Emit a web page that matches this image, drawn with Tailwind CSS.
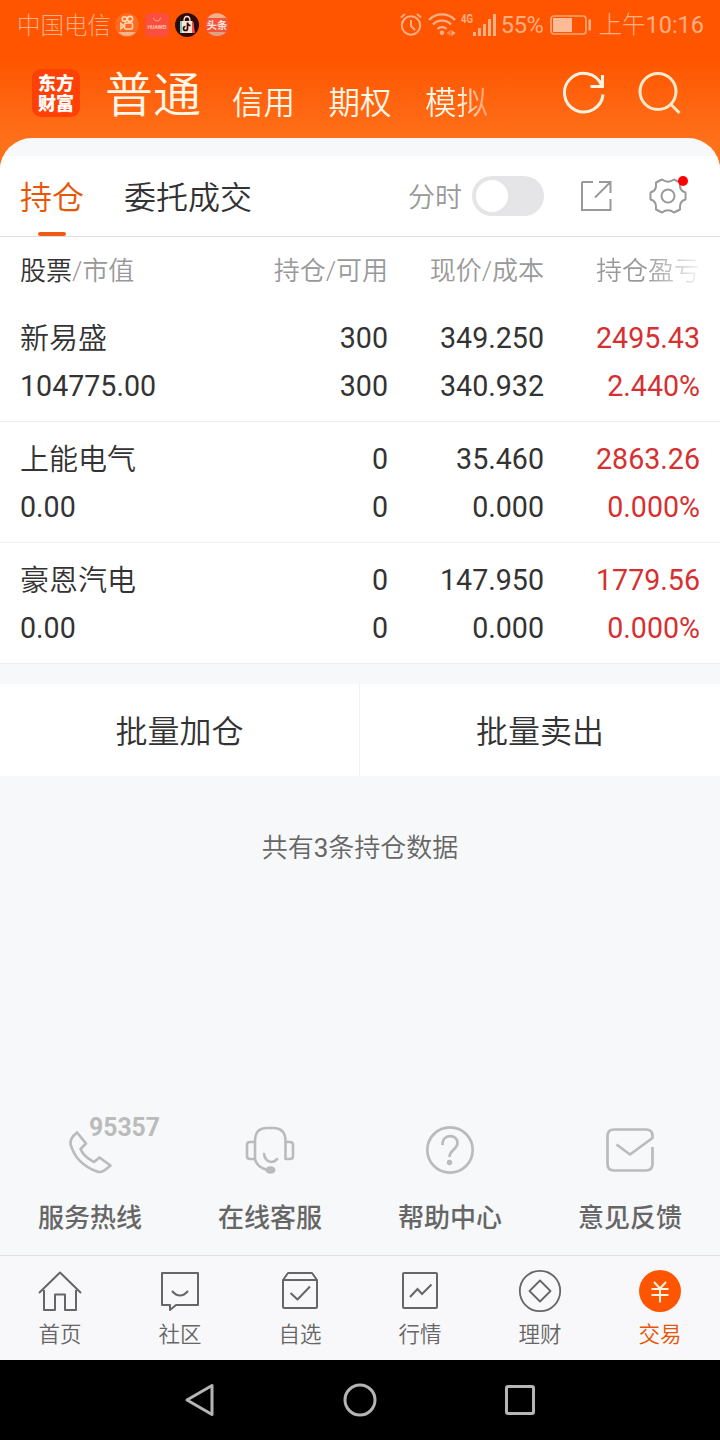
<!DOCTYPE html>
<html lang="zh-CN">
  <head>
    <meta charset="utf-8" />
    <meta name="viewport" content="width=device-width, initial-scale=1" />
    <title>持仓</title>
    <script src="https://cdn.jsdelivr.net/npm/@tailwindcss/browser@4"></script>
  </head>
  <body class="w-[720px] h-[1440px] overflow-hidden bg-[#f7f8fa] font-['Roboto','Noto_Sans_CJK_SC',sans-serif] font-[350] text-[#333]">
    <div class="w-full h-full flex flex-col">
      <header class="h-[200px] -mb-[62px] shrink-0 bg-linear-to-b from-[#ff5500] from-30% to-[#ff7019] to-70%">
        <!-- status bar -->
        <div class="h-12 pt-px pl-[17px] pr-4 flex items-center text-[#ffb084] text-[23.5px] leading-12">
          <span class="pt-0.5 font-light">中国电信</span>
          <div class="ml-1 flex items-center gap-[6px]">
            <svg class="size-6" viewBox="0 0 24 24">
              <circle cx="12" cy="12" r="12" fill="#ff6a20" />
              <g fill="none" stroke="#ffd9b8" stroke-width="1.6">
                <circle cx="9.500" cy="6" r="2.300" /><circle cx="15" cy="6" r="2.600" />
                <rect x="9.500" y="10" width="8" height="6" rx="1.500" /><path d="M6 10.500l3 2.500-3 2.500z" />
              </g>
              <path d="M3 19h18a12 12 0 0 1-18 0z" fill="#f6b48d" />
            </svg>
            <svg class="size-6" viewBox="0 0 24 24">
              <rect width="24" height="24" rx="5" fill="#fb4e3d" />
              <path d="M8.500 4.500a3.500 3.500 0 0 0 7 0" fill="none" stroke="#ffa58e" />
              <text x="12" y="15.500" text-anchor="middle" font-size="5" font-weight="700" fill="#ffc3b5" textLength="19" lengthAdjust="spacingAndGlyphs">HUAWEI</text>
            </svg>
            <svg class="size-6" viewBox="0 0 24 24">
              <circle cx="12" cy="12" r="12" fill="#2d0d0a" />
              <path d="M5 8h13l1 12H5z" fill="#ffe3d2" /><path d="M5 8h2v12H5z" fill="#7ccbc0" /><path d="M17 8h1l2 12h-3z" fill="#fb4c53" />
              <path d="M9 8c0-6 6-6 6 0" fill="none" stroke="#ffe3d2" stroke-width="1.300" />
              <path d="M12.500 9.500v6a2 2 0 1 1-2-2M12.500 10c.5 2 1.500 2.500 3 2.500" fill="none" stroke="#2d0d0a" stroke-width="1.700" />
            </svg>
            <svg class="size-6" viewBox="0 0 24 24">
              <circle cx="12" cy="12" r="12" fill="#f5533a" />
              <path d="M2.500 5a12 12 0 0 1 19 0z" fill="#f4b08a" /><path d="M3 19h18a12 12 0 0 1-18 0z" fill="#e0a183" />
              <text x="12" y="16" text-anchor="middle" font-size="10.500" font-weight="700" fill="#ffe6da">头条</text>
            </svg>
          </div>
          <svg class="ml-auto w-[22px] h-6" viewBox="0 0 22 24" fill="none" stroke="#ffb084" stroke-width="2">
            <circle cx="11" cy="12.500" r="9.200" /><path d="M11 7v6l4 4M1 4.500l4-3.500M21 4.500l-4-3.500" />
          </svg>
          <svg class="ml-[6px] w-7 h-6" viewBox="0 0 28 24" fill="none" stroke="#ffb084" stroke-width="2.300">
            <path d="M1 7a18 18 0 0 1 26 0M5 11.500a12.500 12.500 0 0 1 18 0M9.500 16a6.500 6.500 0 0 1 9 0" /><circle cx="14" cy="19.800" r="2.300" fill="#ffb084" stroke="none" />
            <path d="M18.500 20l4-3v6z" fill="#ff8a4a" stroke="none" /><path d="M27.500 20l-4-3v6z" fill="#ffb084" stroke="none" />
          </svg>
          <svg class="ml-[5px] w-9 h-6 overflow-visible" viewBox="0 0 36 24" fill="#ffb084">
            <text x="0" y="10" font-size="12.500" font-weight="700" textLength="12" lengthAdjust="spacingAndGlyphs">4G</text>
            <path d="M12 19h3v4h-3zM17 15h3v8h-3zM22 11h3v12h-3zM27 6h3v17h-3zM32 1h3v22h-3z" />
          </svg>
          <span class="ml-1 pt-px font-normal tracking-[-0.3px]">55%</span>
          <svg class="ml-[7px] w-[42px] h-5" viewBox="0 0 42 20">
            <rect x="1" y="1" width="35" height="18" rx="3" fill="none" stroke="#ffa672" stroke-width="1.700" />
            <rect x="3" y="3" width="19" height="14" fill="#ffbb98" /><rect x="38.500" y="4.500" width="2.500" height="11" fill="#ffb084" />
          </svg>
          <span class="ml-[6px] pt-px font-light">上午<span class="font-normal">10:16</span></span>
        </div>
        <div class="h-[90px] pl-8 pr-[38px] flex items-center text-[#fff7e8]">
          <svg class="size-12 font-black" viewBox="0 0 48 48" font-size="18" fill="#fff" text-anchor="middle">
            <rect width="48" height="48" rx="9" fill="#ff4105" />
            <text x="24" y="21">东方</text>
            <text x="24" y="41">财富</text>
          </svg>
          <div class="ml-[25px] pt-[6px] text-[48px] leading-[84px]">普通</div>
          <div class="ml-[31px] pt-[21px] flex gap-[33.5px] text-[31.5px]">
            <span>信用</span>
            <span>期权</span>
            <span class="bg-linear-to-r from-[#fff7e8] from-50% to-[#fff7e8]/40 bg-clip-text text-transparent">模拟</span>
          </div>
          <svg class="ml-auto w-11 h-11" viewBox="0 0 44 44" fill="none" stroke="#fff3e0" stroke-width="3">
            <path d="M41 23.500A19.300 19.300 0 1 1 39.500 14M28.500 15.500h12V4" />
          </svg>
          <svg class="ml-8 size-11" viewBox="0 0 44 44" fill="none" stroke="#ffeacb" stroke-width="3">
            <circle cx="20" cy="20.500" r="18" /><path d="M32.500 33l9 9" />
          </svg>
        </div>
      </header>

      <main class="h-[1117px] shrink-0 flex flex-col rounded-t-[32px] bg-[#f7f8fa] overflow-hidden">
        <section class="mt-[18px] bg-white">
          <div class="h-[81px] px-5 flex items-center border-b border-[#ddd] text-[32px]">
            <div class="relative h-20 leading-[84px] text-[#ea5504]">
              持仓
              <div class="absolute bottom-0 left-[18px] w-7 h-1 rounded-sm bg-[#f05a14]"></div>
            </div>
            <div class="ml-10 h-20 leading-[84px]">委托成交</div>
            <div class="ml-auto pt-1 text-[27px] text-[#999]">分时</div>
            <div class="ml-[10px] w-[72px] h-10 rounded-full bg-[#e5e5e7] p-1"><div class="size-8 rounded-full bg-white"></div></div>
            <svg class="ml-9 size-8" viewBox="0 0 32 32" fill="none" stroke="#999" stroke-width="2">
              <path d="M13 2H3a1 1 0 0 0-1 1v27h28.500V19M19 2h11.500v11M30.500 2L15 17.500" />
            </svg>
            <div class="relative ml-[37px] mr-[13px]">
              <svg class="size-[38px]" viewBox="0 0 38 38" fill="none" stroke="#999" stroke-width="2" stroke-linejoin="round">
                <path d="M13 2.500Q19 7 25 2.500L31 5.500Q30 14 36.500 15.500V22.500Q30 24 31 32.500L25 35.500Q19 31 13 35.500L7 32.500Q8 24 1.500 22.500V15.500Q8 14 7 5.500z" />
                <circle cx="19" cy="19" r="6.500" />
              </svg>
              <div class="absolute -top-px -right-px size-[10px] rounded-full bg-[#f00]"></div>
            </div>
          </div>
          <div class="h-[64px] pt-1 px-5 grid grid-cols-[200px_168px_156px_156px] items-center text-right text-[26px] text-[#999]">
            <div class="text-left"><span class="text-[#333]">股票</span>/市值</div>
            <div>持仓/可用</div>
            <div>现价/成本</div>
            <div class="bg-linear-to-r from-[#999] from-65% to-[#999]/10 bg-clip-text text-transparent">持仓盈亏</div>
          </div>
          <div id="positions"></div>
        </section>
        <div class="mt-5 h-[92px] shrink-0 flex bg-white text-[32px] leading-[96px] text-center">
          <div class="w-[360px] border-r border-[#f3f3f4]">批量加仓</div>
          <div class="w-[360px]">批量卖出</div>
        </div>
        <div class="mt-[52px] text-center text-[26px] leading-10 text-[#666]">共有<span class="font-normal">3</span>条持仓数据</div>
        <div class="mt-auto mb-[17px] grid grid-cols-4 text-center text-[26px] leading-10 font-medium text-[#666]">
          <div>
            <svg class="w-[180px] h-[72px] mb-[15px]" viewBox="0 0 180 72" fill="none" stroke="#bbb" stroke-width="2.700" stroke-linejoin="round">
              <path d="M77 21.500Q70 27 70.500 33Q76 53 97 60.500Q101 62 105 59L110.500 54.500L99.500 46.500L94 51Q84 46 80.500 38L86 32.500z" />
              <text x="89" y="25" textLength="71" lengthAdjust="spacingAndGlyphs" font-size="25" font-weight="700" fill="#bbb" stroke="none">95357</text>
            </svg>
            服务热线
          </div>
          <div>
            <svg class="w-[180px] h-[72px] mb-[15px]" viewBox="0 0 180 72" fill="none" stroke="#bbb" stroke-width="2.600" stroke-linecap="round">
              <path d="M75 48V30Q75 17 87 17H93Q105.500 17 105.500 30V48M75 31H70Q67 31 67 34V45Q67 48 70 48H75Q77 57 88 59M105.500 31H110Q113 31 113 34V45Q113 48 110 48H105.500M84 43Q85 50 91 51Q95 51 97 48" />
              <ellipse cx="90.500" cy="59" rx="5" ry="3.800" fill="#bbb" stroke="none" />
            </svg>
            在线客服
          </div>
          <div>
            <svg class="w-[180px] h-[72px] mb-[15px]" viewBox="0 0 180 72" fill="none" stroke="#bbb" stroke-width="2.700">
              <circle cx="90" cy="39" r="22.700" /><path d="M82.500 34C82 22.500 97.500 22.500 97.500 32C97.500 38 89.500 39 89.500 46" /><circle cx="89.500" cy="51.500" r="2.700" fill="#bbb" stroke="none" />
            </svg>
            帮助中心
          </div>
          <div>
            <svg class="w-[180px] h-[72px] mb-[15px]" viewBox="0 0 180 72" fill="none" stroke="#bbb" stroke-width="2.700">
              <path d="M112.500 36V53Q112.500 59.500 106 59.500H74Q67.500 59.500 67.500 53V25Q67.500 18.500 74 18.500H106Q112.500 18.500 112.500 25V27L90 43.500L76.500 33.500" stroke-linejoin="round" />
            </svg>
            意见反馈
          </div>
        </div>
      </main>

      <nav class="h-[105px] shrink-0 border-t border-[#e2e3e5] bg-[#f8f8fa] grid grid-cols-6 text-center text-[21.5px] leading-8 text-[#666]">
        <div>
          <svg class="mx-auto mt-3 mb-[3px] size-12" viewBox="0 0 48 48" fill="none" stroke="#666" stroke-width="2" stroke-linejoin="round">
            <path d="M3 25L24 4.500L45 25M8 22V42H19V26.500H29V42H40V22" />
          </svg>
          首页
        </div>
        <div>
          <svg class="mx-auto mt-3 mb-[3px] size-12" viewBox="0 0 48 48" fill="none" stroke="#666" stroke-width="2" stroke-linejoin="round">
            <path d="M6 5H42V37H20L14 42V37H6zM16 23Q24 32 32 23" />
          </svg>
          社区
        </div>
        <div>
          <svg class="mx-auto mt-3 mb-[3px] size-12" viewBox="0 0 48 48" fill="none" stroke="#666" stroke-width="2" stroke-linejoin="round">
            <path d="M7 12L12 5H36L41 12V38.500Q41 40 39.500 40H8.500Q7 40 7 38.500V12H41M14.500 25L21.500 31.500L34 18.500" />
          </svg>
          自选
        </div>
        <div>
          <svg class="mx-auto mt-3 mb-[3px] size-12" viewBox="0 0 48 48" fill="none" stroke="#666" stroke-width="2">
            <rect x="7" y="5" width="34" height="35" rx="1" /><path d="M14 29L21.500 21L26 26L35.500 16.500" />
          </svg>
          行情
        </div>
        <div>
          <svg class="mx-auto mt-3 mb-[3px] size-12" viewBox="0 0 48 48" fill="none" stroke="#666" stroke-width="1.800" stroke-linejoin="round">
            <circle cx="24" cy="23" r="20.200" /><path d="M24 12.500L34.500 23L24 33.500L13.500 23z" />
          </svg>
          理财
        </div>
        <div class="text-[#e65505]">
          <svg class="mx-auto mt-3 mb-[3px] size-12" viewBox="0 0 48 48" fill="none" stroke="#fff1df" stroke-width="2">
            <circle cx="24" cy="23" r="21" fill="#ff5500" stroke="none" /><path d="M18 14L24 20.500L30 14M15.500 21H32.500M15.500 27H32.500M24 21V34.500" />
          </svg>
          交易
        </div>
      </nav>

      <!-- android buttons -->
      <div class="h-20 shrink-0 bg-black flex items-center justify-center gap-[120px]">
        <svg class="size-10" viewBox="0 0 40 40" fill="none" stroke="#b5b5b5" stroke-width="3" stroke-linejoin="round"><path d="M7 20L32 5.500V34.500z" /></svg>
        <svg class="size-10" viewBox="0 0 40 40" fill="none" stroke="#b5b5b5" stroke-width="3"><circle cx="20" cy="20" r="15" /></svg>
        <svg class="size-10" viewBox="0 0 40 40" fill="none" stroke="#b5b5b5" stroke-width="3"><rect x="6.500" y="6.500" width="27" height="27" rx="1.500" /></svg>
      </div>
    </div>
  </body>
  <script>
    const positions = [
      ['新易盛', '104775.00', '300', '300', '349.250', '340.932', '2495.43', '2.440%'],
      ['上能电气', '0.00', '0', '0', '35.460', '0.000', '2863.26', '0.000%'],
      ['豪恩汽电', '0.00', '0', '0', '147.950', '0.000', '1779.56', '0.000%']
    ]

    document.getElementById('positions').innerHTML = positions.map(p => `
      <div class="h-[121px] pt-[13px] px-5 grid grid-cols-[200px_168px_156px_156px] grid-rows-[48px_48px] border-b border-[#eee] text-right text-[28.6px] leading-12 font-normal">
        <div class="pt-px text-left text-[29px] leading-12 font-[350]">${p[0]}</div><div>${p[2]}</div><div>${p[4]}</div><div class="text-[#d63031]">${p[6]}</div>
        <div class="text-left">${p[1]}</div><div>${p[3]}</div><div>${p[5]}</div><div class="text-[#d63031]">${p[7]}</div>
      </div>`).join('')
  </script>
</html>
